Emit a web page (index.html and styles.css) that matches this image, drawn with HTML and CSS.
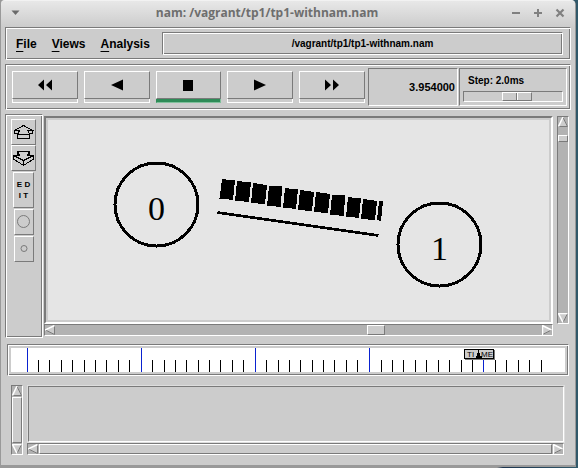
FILE: index.html
```html
<!DOCTYPE html>
<html lang="en">
<head>
<meta charset="utf-8">
<title>nam: /vagrant/tp1/tp1-withnam.nam</title>
<link rel="stylesheet" href="styles.css">
</head>
<body>
<svg class="defs" aria-hidden="true">
  <symbol id="tri-up" viewBox="0 0 10 10"><path d="M5 0L10 10H0z" fill="#ccc"/><path d="M5 0.5L9.5 9.5H0.5" fill="none" stroke="#7a7a7a"/><path d="M5 0L0.5 9.5" fill="none" stroke="#fff" stroke-width="1.5"/></symbol>
  <symbol id="tri-down" viewBox="0 0 10 10"><path d="M0 0H10L5 10z" fill="#ccc"/><path d="M9.5 0.5L5 9.5" fill="none" stroke="#7a7a7a"/><path d="M9.5 0.5H0.5L5 9.5" fill="none" stroke="#fff" stroke-width="1.5"/></symbol>
  <symbol id="tri-left" viewBox="0 0 10 10"><path d="M0 5L10 0V10z" fill="#ccc"/><path d="M0.5 5L9.5 9.5V0.5" fill="none" stroke="#7a7a7a"/><path d="M0 5L9.5 0.5" fill="none" stroke="#fff" stroke-width="1.5"/></symbol>
  <symbol id="tri-right" viewBox="0 0 10 10"><path d="M0 0L10 5L0 10z" fill="#ccc"/><path d="M9.5 5L0.5 9.5" fill="none" stroke="#7a7a7a"/><path d="M0.5 10V0.5L9.5 5" fill="none" stroke="#fff" stroke-width="1.5"/></symbol>
</svg>

<main class="window">
  <header class="titlebar">
    <button class="wm" aria-label="Window menu"><svg width="9" height="6"><path d="M0.5 0.5H8.5L4.5 5z" fill="#6a6a6a"/></svg></button>
    <h1>nam: /vagrant/tp1/tp1-withnam.nam</h1>
    <div class="wm-group">
      <button class="wm" aria-label="Minimize"><svg width="10" height="10"><path d="M1 5H9" stroke="#808080" stroke-width="2"/></svg></button>
      <button class="wm" aria-label="Maximize"><svg width="10" height="10"><path d="M1 5H9M5 1V9" stroke="#808080" stroke-width="2"/></svg></button>
      <button class="wm" aria-label="Close"><svg width="10" height="10"><path d="M1.5 1.5L8.5 8.5M8.5 1.5L1.5 8.5" stroke="#808080" stroke-width="2.2"/></svg></button>
    </div>
  </header>

  <div class="groove menubar">
    <nav class="menus">
      <button><u>F</u>ile</button>
      <button><u>V</u>iews</button>
      <button><u>A</u>nalysis</button>
    </nav>
    <div class="groove path">/vagrant/tp1/tp1-withnam.nam</div>
  </div>

  <div class="groove toolbar">
    <div class="transport">
      <div class="key"><button class="raised" aria-label="Rewind"><svg width="16" height="12"><path d="M7 0.5V11.5L1 6zM15 0.5V11.5L9 6z"/></svg></button><i></i></div>
      <div class="key"><button class="raised" aria-label="Play backward"><svg width="16" height="12"><path d="M14 0.5V11.5L2 6z"/></svg></button><i></i></div>
      <div class="key active"><button class="raised" aria-label="Stop"><svg width="16" height="12"><path d="M3 1H13V12H3z"/></svg></button><i></i></div>
      <div class="key"><button class="raised" aria-label="Play forward"><svg width="16" height="12"><path d="M2 0.5V11.5L14 6z"/></svg></button><i></i></div>
      <div class="key"><button class="raised" aria-label="Fast forward"><svg width="16" height="12"><path d="M1 0.5V11.5L7 6zM9 0.5V11.5L15 6z"/></svg></button><i></i></div>
    </div>
    <output class="clock">3.954000</output>
    <div class="step">
      <label for="step">Step: 2.0ms</label>
      <input id="step" type="range" min="0" max="100" value="56">
    </div>
  </div>

  <section class="workspace">
    <div class="groove tools">
      <button class="raised tool wide" aria-label="Zoom in"><svg width="23" height="24"><g class="line"><path d="M2.5 10.5L11.5 5.5L20.5 10.5H16L17.5 14.5H5.5L7.5 10.5H2.5V13.5H6M20.5 10.5V13.5H17M5.5 14.5V18.5H17.5V14.5z"/></g></svg></button>
      <button class="raised tool wide" aria-label="Zoom out"><svg width="23" height="24"><g class="line"><path d="M5.5 5.5H17.5L15.5 9.5H21.5L11.5 14.5L1.5 9.5H7.5L5.5 5.5V8.5M17.5 5.5V8.5M1.5 9.5V13L11.5 19.5L21.5 13V9.5M11.5 14.5V19.5"/></g></svg></button>
      <button class="raised tool edit">E D<br>I T</button>
      <button class="raised tool" aria-label="Larger nodes"><svg width="18" height="24"><circle cx="8.5" cy="11.5" r="6" fill="none" stroke="#7a7a7a"/></svg></button>
      <button class="raised tool" aria-label="Smaller nodes"><svg width="18" height="24"><circle cx="9" cy="11.5" r="3" fill="none" stroke="#7a7a7a"/></svg></button>
    </div>

    <div class="canvas">
      <svg class="scene" role="img" aria-label="Network animation">
        <g fill="none" stroke="#000" stroke-width="3" shape-rendering="crispEdges">
          <circle cx="108.5" cy="84.5" r="41.5"/>
          <circle cx="391.5" cy="124.5" r="41.5"/>
          <path d="M169.5 92.5L330.5 115.5" stroke-width="2.6"/>
        </g>
        <g class="node-name">
          <text x="108.5" y="100">0</text>
          <text x="391.5" y="140">1</text>
        </g>
        <g shape-rendering="crispEdges">
          <path d="M174 59L187 60.5L185 80L171.500 78.500z"/>
          <path d="M189 61L203 62.500L201 82L187 80.500z"/>
          <path d="M205 63L219 65L217 84L203 83z"/>
          <path d="M221 66H234L233 87L219 85.500z"/>
          <path d="M237 68L250 69.500L248 89L235 87.500z"/>
          <path d="M252 70L266 72L264 91L250 90z"/>
          <path d="M268 72L282 74L280 93L266 92z"/>
          <path d="M284 75H297L296 96L282 94.500z"/>
          <path d="M300 77L313 78.500L311 98L298 96.500z"/>
          <path d="M315 79L329 81L327 100L313 99z"/>
          <path d="M331 81H335L333 101L329 100z"/>
        </g>
      </svg>
    </div>

    <div class="scroll vertical main-v">
      <button aria-label="Scroll up"><svg width="10" height="10"><use href="#tri-up"/></svg></button>
      <div class="track"><span class="raised thumb pan-y"></span></div>
      <button aria-label="Scroll down"><svg width="10" height="10"><use href="#tri-down"/></svg></button>
    </div>

    <div class="scroll horizontal main-h">
      <button aria-label="Scroll left"><svg width="10" height="10"><use href="#tri-left"/></svg></button>
      <div class="track"><span class="raised thumb pan-x"></span></div>
      <button aria-label="Scroll right"><svg width="10" height="10"><use href="#tri-right"/></svg></button>
    </div>
  </section>

  <section class="groove timeline">
    <svg class="ruler" role="img" aria-label="Timeline">
      <g shape-rendering="crispEdges">
        <path class="minor" d="M27.500 12v12M38.500 12v12M50.500 12v12M61.500 12v12M73.500 12v12M84.500 12v12M95.500 12v12M107.500 12v12M118.500 12v12M141.500 12v12M153.500 12v12M164.500 12v12M175.500 12v12M187.500 12v12M198.500 12v12M209.500 12v12M221.500 12v12M232.500 12v12M255.500 12v12M267.500 12v12M278.500 12v12M289.500 12v12M301.500 12v12M312.500 12v12M323.500 12v12M335.500 12v12M346.500 12v12M370.500 12v12M381.500 12v12M392.500 12v12M404.500 12v12M415.500 12v12M427.500 12v12M438.500 12v12M450.500 12v12M461.500 12v12M484.500 12v12M495.500 12v12M507.500 12v12M518.500 12v12M530.500 12v12"/>
        <path class="major" d="M16.500 0v24M130.500 0v24M244.500 0v24M358.500 0v24M472.500 12v12"/>
        <path d="M454 2h30v10h-30z" fill="#7a7a7a"/>
        <path d="M453.500 1.500h29v9h-29z" fill="#ccc" stroke="#000"/>
        <path d="M467 1h1v4h1v3h2v3h-6v-3h1v-3h1z"/>
      </g>
      <g class="marker">
        <text x="456" y="9">TI</text>
        <text x="470" y="9">ME</text>
      </g>
    </svg>
  </section>

  <section class="notes">
    <div class="scroll vertical full">
      <button aria-label="Scroll notes up"><svg width="10" height="10"><use href="#tri-up"/></svg></button>
      <div class="track"><span class="raised thumb fill"></span></div>
      <button aria-label="Scroll notes down"><svg width="10" height="10"><use href="#tri-down"/></svg></button>
    </div>
    <div class="notes-body">
      <div class="list"></div>
      <div class="scroll horizontal full">
        <button aria-label="Scroll notes left"><svg width="10" height="10"><use href="#tri-left"/></svg></button>
        <div class="track"><span class="raised thumb fill"></span></div>
        <button aria-label="Scroll notes right"><svg width="10" height="10"><use href="#tri-right"/></svg></button>
      </div>
    </div>
  </section>
</main>
</body>
</html>
```

FILE: styles.css
```css
:root {
  --face: #ccc;
  --dark: #7a7a7a;
  --light: #fff;
  --trough: #b2b2b2;
}

* { box-sizing: border-box; }

body {
  margin: 0;
  padding: 0 2px 1px 0;
  min-height: 100vh;
  display: flex;
  background: linear-gradient(90deg, #999 0, #999 86%, #1d3550 87%, #31596a 100%);
  font: bold 11px/14px "Liberation Sans", Arial, sans-serif;
  color: #000;
}

.defs { position: absolute; width: 0; height: 0; }
svg { display: block; }

button {
  margin: 0;
  padding: 0;
  border: 0;
  background: none;
  font: inherit;
  color: inherit;
}

.window {
  flex: 1;
  min-width: 0;
  display: flex;
  flex-direction: column;
  background: var(--face);
  border: solid #999;
  border-width: 0 1px 2px;
  border-radius: 5px 5px 0 0;
}

.groove {
  border: 1px solid;
  border-color: var(--dark) var(--light) var(--light) var(--dark);
  box-shadow: inset 1px 1px var(--light), inset -1px -1px var(--dark);
}

.raised {
  background: var(--face);
  border: 1px solid;
  border-color: var(--light) var(--dark) var(--dark) var(--light);
}

/* Title bar */
.titlebar {
  display: grid;
  grid-template-columns: 20px 1fr 62px;
  align-items: center;
  height: 27px;
  padding: 0 10px 2px;
  background: linear-gradient(#e8e8e8, #ccc);
  border-top: 1px solid #f2f2f2;
  border-radius: 4px 4px 0 0;
}

.titlebar h1 {
  margin: 0;
  font: bold 12px/16px "Open Sans", "Noto Sans", sans-serif;
  color: #6e6e6e;
  text-align: center;
  white-space: nowrap;
}

.wm { justify-self: start; }
.wm-group { display: flex; justify-content: flex-end; gap: 12px; }

/* Menu bar */
.menubar {
  display: flex;
  align-items: center;
  margin: 0 4px;
  padding: 4px 7px 4px 10px;
}

.menus { display: flex; gap: 15px; width: 146px; font-size: 12px; }
.menus u { text-underline-offset: 3px; }

.path { flex: 1; padding: 4px 0 3px; font-size: 10px; text-align: center; }

/* Toolbar */
.toolbar {
  display: flex;
  gap: 1px;
  margin: 4px 4px 0;
  padding: 3px;
}

.transport { flex: 1; display: flex; gap: 6px; padding: 3px 2px 2px 3px; }
.key { flex: 1; }
.key button {
  display: flex;
  justify-content: center;
  align-items: center;
  width: 100%;
  height: 28px;
}
.key i { display: block; height: 4px; border: 1px solid var(--light); border-top: 0; }
.key.active i { background: #2e8b57; border-color: #2e8b57 #7fc09b #7fc09b #2e8b57; }

.clock, .step {
  border: 1px solid;
  border-color: var(--dark) var(--light) var(--light) var(--dark);
}
.clock { width: 90px; padding: 11px 2px; text-align: right; }
.step { width: 108px; padding: 5px 3px 3px; }
.step label { display: block; padding-left: 5px; font-size: 10px; }

#step {
  appearance: none;
  display: block;
  width: 100%;
  height: 11px;
  margin: 3px 0 0;
  background: var(--face);
  border: 1px solid;
  border-color: var(--dark) var(--light) var(--light) var(--dark);
}
#step::-webkit-slider-thumb {
  appearance: none;
  width: 30px;
  height: 9px;
  background: linear-gradient(90deg, transparent 13px, var(--dark) 13px 14px, var(--light) 14px 15px, transparent 15px), var(--face);
  border: 1px solid;
  border-color: var(--light) var(--dark) var(--dark) var(--light);
}

/* Workspace */
.workspace {
  flex: 1;
  display: grid;
  grid-template-columns: 38px 1fr 12px;
  grid-template-rows: 1fr 14px;
  margin: 4px 6px 0 4px;
}

.tools {
  grid-row: 1 / 3;
  display: flex;
  flex-direction: column;
  align-items: center;
  gap: 1px;
  padding: 4px 6px 4px 5px;
}
.tool { width: 20px; }
.tool.wide { width: 25px; }
.tool.wide + .wide { margin-top: -1px; }
.tool.edit {
  width: 21px;
  height: 36px;
  font: bold 8px/11px "Liberation Sans", Arial, sans-serif;
}

.canvas {
  margin: 2px 4px 0 1px;
  border: 2px solid;
  border-color: var(--dark) var(--light) var(--light) var(--dark);
  padding: 2px;
  background: #e5e5e5 content-box;
}
.scene { width: 100%; height: 100%; min-height: 200px; }
.node-name { font: 34px "Liberation Serif", "Times New Roman", serif; text-anchor: middle; }
.line { fill: none; stroke: #000; shape-rendering: crispEdges; }

/* Scroll bars */
.scroll {
  display: flex;
  background: var(--trough);
  border: 1px solid;
  border-color: var(--dark) var(--light) var(--light) var(--dark);
}
.vertical { flex-direction: column; width: 12px; }
.horizontal { height: 12px; }
.track { flex: 1; display: flex; }
.vertical .track { flex-direction: column; }
.vertical.full .track { padding: 1px 0; }
.horizontal.full .track { padding: 0 1px; }
.pan-x { width: 18px; margin-left: 64%; }
.pan-y { height: 7px; margin-top: 8px; }
.fill { flex: 1; }

.main-v { margin-top: 2px; }
.main-h { grid-column: 2; margin: 0 4px 0 1px; }

/* Timeline */
.timeline { margin: 6px 6px 0; padding: 3px; }
.ruler { width: 100%; height: 24px; background: #fff; }
.minor { stroke: #000; }
.major { stroke: #0a22d0; }
.marker { font: 8px "Liberation Sans", Arial, sans-serif; }

/* Notes */
.notes { display: flex; gap: 4px; margin: 9px 11px 10px 10px; }
.notes-body { flex: 1; }
.list {
  height: 56px;
  margin: 1px 0 1px 1px;
  border: 1px solid;
  border-color: var(--dark) var(--light) var(--light) var(--dark);
  box-shadow: 0 0 0 1px #ddd;
}
```
